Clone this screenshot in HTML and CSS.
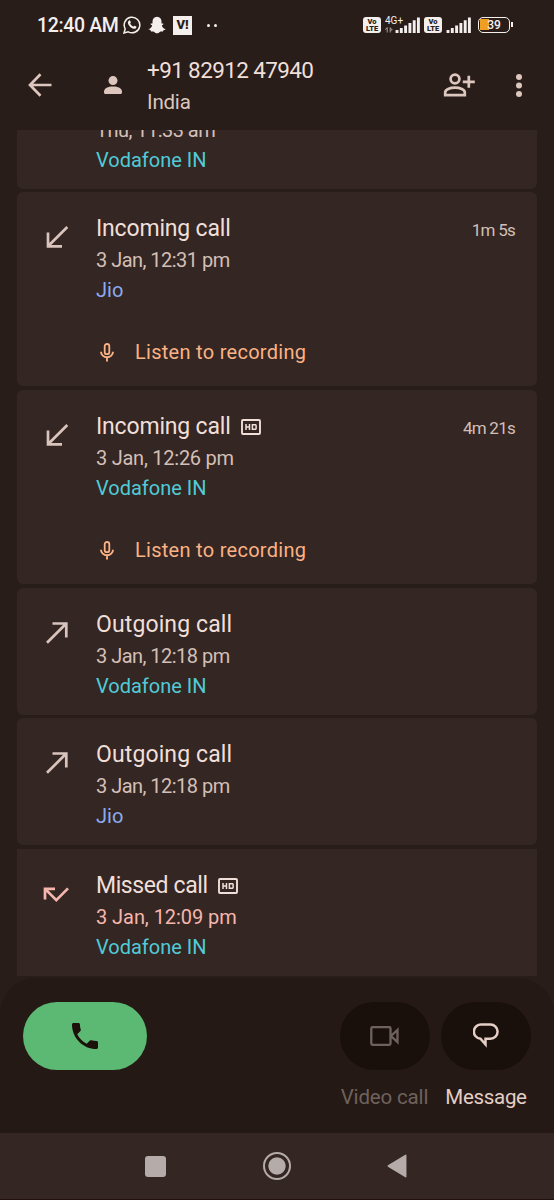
FILE: index.html
```html
<!DOCTYPE html>
<html lang="en">
<head>
<meta charset="utf-8">
<title>Call history</title>
<link rel="stylesheet" href="styles.css">
</head>
<body>
<svg class="defs" width="0" height="0">
  <symbol id="in" viewBox="0 0 24 24"><path d="M22.300 2 3.500 20.800M3 7.500v13.800h14" fill="none" stroke="currentColor" stroke-width="2.700"/></symbol>
  <symbol id="out" viewBox="0 0 24 24"><path d="M2 21.800 21 2.800M7.500 2.500h13.800v14" fill="none" stroke="currentColor" stroke-width="2.700"/></symbol>
  <symbol id="missed" viewBox="0 0 26 16"><path d="M2 12.500V1.800H12M2.300 2.100 13.300 13.100 25 1.400" fill="none" stroke="currentColor" stroke-width="2.700"/></symbol>
  <symbol id="hd" viewBox="0 0 20 16"><rect x="1" y="1" width="18" height="14" rx="1" fill="none" stroke="currentColor" stroke-width="1.900"/><path d="M5 5v6M8.500 5v6M5 8h3.500M11.400 5.700h3.100l.6.600v3.400l-.6.600h-3.100z" fill="none" stroke="currentColor" stroke-width="1.500"/></symbol>
  <symbol id="mic" viewBox="0 0 14 19"><rect x="4.700" y="1" width="4.600" height="10.200" rx="2.300" fill="none" stroke="currentColor" stroke-width="1.800"/><path d="M1 8.700a6 5.600 0 0 0 12 0M7 14.300V18.500" fill="none" stroke="currentColor" stroke-width="1.900"/></symbol>
  <symbol id="bars" viewBox="0 0 25 16"><path d="M2 13v3M6.300 11v5M10.600 8.500v7.500M14.900 6v10M19.200 3.200v12.800M23.400.5v15.500" fill="none" stroke="currentColor" stroke-width="2.900"/></symbol>
</svg>
<div class="phone">
  <div class="status">
    <span class="clock">12:40 AM</span>
    <svg class="whatsapp" viewBox="0 0 18 18"><path d="M1 17l1.200-4.200A7.800 7.800 0 1 1 5.200 15.800z" fill="none" stroke="currentColor" stroke-width="1.500"/><path d="M5.800 4.700c.7-.6 1.200-.4 1.400.1l.6 1.400c.2.500-.7 1.100-.6 1.400.6 1.300 1.700 2.300 3.100 2.900.4.100.9-1 1.300-.8l1.600.8c.5.300.1 1.500-.6 1.900-2.600 1.300-7.300-2.300-7.700-5.500-.1-.9.300-1.700.9-2.200z" fill="currentColor"/></svg>
    <svg class="snap" viewBox="0 0 18 18"><path d="M9 .8c3 0 4.500 2.200 4.500 4.700v2c.7.200 1.500-.4 1.900.2.300.7-.8 1.200-1.600 1.700.5 1.900 1.900 3.100 3.700 3.700-.1.900-1.400 1-2.200 1.300-.3.400-.1 1-.6 1.200-.9.100-1.900-.3-2.900.3S10.200 17.300 9 17.300s-1.800-.8-2.800-1.400-2-.2-2.900-.3c-.5-.2-.3-.8-.6-1.200C1.900 14.100.6 14 .5 13.100c1.800-.6 3.200-1.800 3.700-3.700-.8-.5-1.900-1-1.600-1.700.4-.6 1.200 0 1.900-.2v-2C4.500 3 6 .8 9 .8z" fill="currentColor"/></svg>
    <span class="vi">V!</span>
    <span class="dots"><i></i><i></i></span>
    <span class="volte">Vo<br>LTE</span>
    <span class="net"><b>4G+</b><svg viewBox="0 0 8 6"><path d="M2.200 5.500v-5L.3 2.700M5.200.5v5M5.200.8l2 2-2 .7" fill="none" stroke="currentColor" stroke-width="1"/></svg></span>
    <svg class="bars"><use href="#bars"/></svg>
    <span class="volte second">Vo<br>LTE</span>
    <svg class="bars right"><use href="#bars"/></svg>
    <span class="battery">39</span>
  </div>
  <header class="header">
    <svg class="back" viewBox="0 0 24 24"><path d="M23.500 12H2.500M12.500 1.200 2 12l10.500 10.800" fill="none" stroke="currentColor" stroke-width="2.700"/></svg>
    <svg class="person" viewBox="0 0 18 18"><circle cx="9" cy="4.600" r="4.500" fill="currentColor"/><path d="M0 15.500c0-3.300 4-5.100 9-5.100s9 1.800 9 5.100v1c0 .9-.6 1.500-1.500 1.500h-15C.6 18 0 17.400 0 16.500z" fill="currentColor"/></svg>
    <div class="who"><div class="number">+91 82912 47940</div><div class="country">India</div></div>
    <svg class="add" viewBox="0 0 32 24"><circle cx="12" cy="6" r="4.400" fill="none" stroke="currentColor" stroke-width="2.700"/><path d="M2.200 22.200v-2.800c0-2.700 4.700-4.700 9.800-4.700s9.800 2 9.800 4.700v2.800zM25.800 2.800v12M19.800 8.800h12" fill="none" stroke="currentColor" stroke-width="2.700"/></svg>
    <svg class="more" viewBox="0 0 6 24"><circle cx="3" cy="3" r="3"/><circle cx="3" cy="11.500" r="3"/><circle cx="3" cy="20" r="3"/></svg>
  </header>
  <main class="list">
    <section class="card first">
      <div class="icon"></div>
      <div class="info"><div class="when">Thu, 11:33 am</div><div class="sim">Vodafone IN</div></div>
    </section>
    <section class="card">
      <div class="icon"><svg class="arrow"><use href="#in"/></svg></div>
      <div class="info"><div class="title">Incoming call</div><div class="when">3 Jan, 12:31 pm</div><div class="sim jio">Jio</div>
        <div class="listen"><svg><use href="#mic"/></svg><span>Listen to recording</span></div></div>
      <div class="length">1m 5s</div>
    </section>
    <section class="card">
      <div class="icon"><svg class="arrow"><use href="#in"/></svg></div>
      <div class="info"><div class="title">Incoming call<svg><use href="#hd"/></svg></div><div class="when wide">3 Jan, 12:26 pm</div><div class="sim">Vodafone IN</div>
        <div class="listen"><svg><use href="#mic"/></svg><span>Listen to recording</span></div></div>
      <div class="length">4m 21s</div>
    </section>
    <section class="card">
      <div class="icon"><svg class="arrow"><use href="#out"/></svg></div>
      <div class="info"><div class="title outgoing">Outgoing call</div><div class="when">3 Jan, 12:18 pm</div><div class="sim">Vodafone IN</div></div>
    </section>
    <section class="card">
      <div class="icon"><svg class="arrow"><use href="#out"/></svg></div>
      <div class="info"><div class="title outgoing">Outgoing call</div><div class="when">3 Jan, 12:18 pm</div><div class="sim jio">Jio</div></div>
    </section>
    <section class="card last">
      <div class="icon"><svg class="missed"><use href="#missed"/></svg></div>
      <div class="info"><div class="title no-answer">Missed call<svg><use href="#hd"/></svg></div><div class="when pink">3 Jan, 12:09 pm</div><div class="sim">Vodafone IN</div></div>
    </section>
  </main>
  <footer class="panel">
    <div class="call"><svg viewBox="3 3 18 18"><path d="M6.620 10.790c1.440 2.830 3.760 5.140 6.590 6.590l2.200-2.200c.27-.27.670-.36 1.020-.24 1.120.37 2.330.57 3.570.57.550 0 1 .45 1 1V20c0 .55-.45 1-1 1-9.390 0-17-7.610-17-17 0-.55.45-1 1-1h3.500c.55 0 1 .45 1 1 0 1.250.2 2.450.57 3.570.11.35.03.74-.25 1.020z" fill="currentColor"/></svg></div>
    <div class="action off"><div class="pill"><svg class="video" viewBox="0 0 29 20"><path d="M2.500 1.200h16.800q1.200 0 1.200 1.200v15.200q0 1.200-1.200 1.200H2.500q-1.200 0-1.200-1.200V2.400q0-1.200 1.200-1.200zM21 10l6.500-6v12z" fill="none" stroke="currentColor" stroke-width="2.300"/></svg></div><span>Video call</span></div>
    <div class="action msg"><div class="pill"><svg class="bubble" viewBox="0 0 26 25"><path d="M8.500 1.500h9a7.100 7.100 0 0 1 0 14.200h-5v5.800L7.500 15.700A7.100 7.100 0 0 1 8.500 1.500z" fill="none" stroke="currentColor" stroke-width="2.500" stroke-linejoin="miter" stroke-miterlimit="8"/></svg></div><span>Message</span></div>
  </footer>
  <nav class="nav">
    <i class="square"></i>
    <i class="home"></i>
    <svg viewBox="0 0 20 24"><path d="M18.700 1.300v21.400L1.300 12z" fill="currentColor" stroke="currentColor" stroke-width="1.500" stroke-linejoin="round"/></svg>
  </nav>
</div>
</body>
</html>
```
FILE: styles.css
```css
* { box-sizing: border-box; }
body { margin: 0; background: #281d19; font-family: Roboto, "Liberation Sans", sans-serif; color: #f0dfd9; }
svg { display: block; flex: none; }
.defs { position: absolute; }
.phone { width: 554px; height: 1200px; display: flex; flex-direction: column; overflow: hidden; }

.status { height: 48px; flex: none; display: flex; align-items: center; padding: 2px 0 0 37px; color: #f4efed; }
.clock { width: 86px; font-size: 19.500px; font-weight: 500; white-space: nowrap; letter-spacing: -.35px; }
.whatsapp { width: 18px; height: 18px; }
.snap { width: 18px; height: 18px; margin-left: 7px; }
.vi { width: 19px; height: 19px; margin-left: 7px; background: #f4efed; color: #281d19; font: 900 13px/18px Roboto, sans-serif; text-align: center; }
.dots { display: flex; gap: 4px; margin-left: 15px; width: 149px; }
.dots i { width: 3px; height: 3px; border-radius: 50%; background: #f4efed; }
.volte { width: 18px; height: 16px; margin-left: 7px; border-radius: 3px; background: #f4efed; color: #281d19; font: 900 7.500px/7px Roboto, sans-serif; text-align: center; padding-top: 1px; }
.volte.second { margin-left: 4px; }
.net { width: 19px; height: 18px; margin-left: 4px; margin-right: -9px; }
.net b { display: block; font-size: 10px; font-weight: 400; line-height: 9px; white-space: nowrap; }
.net svg { width: 8px; height: 6px; margin-top: 2px; color: #a79f9b; }
.bars { width: 25px; height: 16px; }
.bars.right { margin-left: 4px; }
.battery { position: relative; width: 32px; height: 16px; margin-left: 7px; border: 1.500px solid #f4efed; border-radius: 5px; background: linear-gradient(#ee9f22, #ee9f22) 1px 1px / 9px 11px no-repeat; font-size: 12px; font-weight: 500; line-height: 14px; text-align: center; }
.battery::after { content: ""; position: absolute; right: -4px; top: 4px; width: 2px; height: 5px; background: #f4efed; }

.header { height: 82px; flex: none; display: flex; align-items: flex-start; padding: 0 0 0 28px; color: #dcc6be; }
.back { width: 24px; height: 24px; margin-top: 25px; }
.person { width: 18px; height: 18px; margin: 28px 0 0 52px; }
.who { width: 296px; margin: 6px 0 0 25px; }
.number { font-size: 22.500px; line-height: 32px; color: #f0dfd9; letter-spacing: -.63px; }
.country { font-size: 20.500px; line-height: 32px; letter-spacing: -.2px; }
.add { width: 32px; height: 24px; margin-top: 25px; }
.more { width: 6px; height: 24px; margin: 26px 0 0 41px; fill: currentColor; }

.list { height: 845.500px; flex: none; padding: 0 17px; display: flex; flex-direction: column; justify-content: flex-end; gap: 3.500px; overflow: hidden; }
.card { flex: none; display: flex; min-height: 126.800px; padding: 21px 22px 14px 25px; border-radius: 6px; background: #342622; }
.first { min-height: 0; padding-top: 0; }
.last { border-radius: 0; }
.icon { width: 54px; padding-top: 12px; color: #d8c4bc; }
.arrow { width: 24px; height: 24px; margin-left: 3px; }
.missed { width: 26px; height: 16px; margin: 5px 0 0 1px; color: #f6b6ad; }
.info { flex: 1; }
.title { display: flex; align-items: center; gap: 10px; font-size: 23px; line-height: 32px; letter-spacing: -.18px; }
.title.outgoing { letter-spacing: .12px; }
.title.no-answer { letter-spacing: -.4px; }
.title svg { width: 20px; height: 16px; }
.when { font-size: 20px; line-height: 31px; letter-spacing: -.53px; color: #d3bfb7; }
.when.wide { letter-spacing: -.25px; }
.when.pink { letter-spacing: -.06px; color: #f6b6ad; }
.sim { font-size: 20px; line-height: 29px; color: #50cbd7; }
.sim.jio { color: #8aaaf0; }
.listen { display: flex; align-items: center; gap: 21px; height: 28px; margin: 33.200px 0 6px 4px; font-size: 20px; letter-spacing: .28px; color: #fbb284; }
.listen svg { width: 14px; height: 19px; }
.length { font-size: 17px; line-height: 35px; letter-spacing: -.75px; color: #d3bfb7; }

.panel { height: 155px; flex: none; display: flex; align-items: flex-start; margin-top: 2.500px; padding: 23.500px 22.500px 0; border-radius: 36px 36px 0 0; background: #241915; }
.call { width: 124px; height: 68px; border-radius: 34px; background: #5cb973; color: #1c100a; display: flex; align-items: center; justify-content: center; }
.call svg { width: 26px; height: 26px; }
.action { width: 90px; margin-left: 193px; display: flex; flex-direction: column; align-items: center; font-size: 20.500px; line-height: 24px; letter-spacing: -.15px; color: #e4cec6; white-space: nowrap; }
.action.msg { margin-left: 11.500px; letter-spacing: -.3px; }
.pill { width: 90px; height: 68px; margin-bottom: 15px; border-radius: 34px; background: #1a100b; display: flex; align-items: center; justify-content: center; }
.off { color: #6f625c; }
.video { width: 29px; height: 20px; }
.bubble { width: 26px; height: 25px; }

.nav { flex: 1; display: flex; align-items: center; padding: 0 0 0 145px; background: #342622; color: #b5acaa; border-bottom: 1px solid #241010; }
.square { width: 21px; height: 21px; border-radius: 3px; background: #b5acaa; }
.home { width: 28px; height: 28px; margin-left: 97px; border: 2.500px solid #b5acaa; border-radius: 50%; background: radial-gradient(circle, #b5acaa 8.200px, transparent 9px); }
.nav svg { width: 20px; height: 24px; margin-left: 96px; }
```
